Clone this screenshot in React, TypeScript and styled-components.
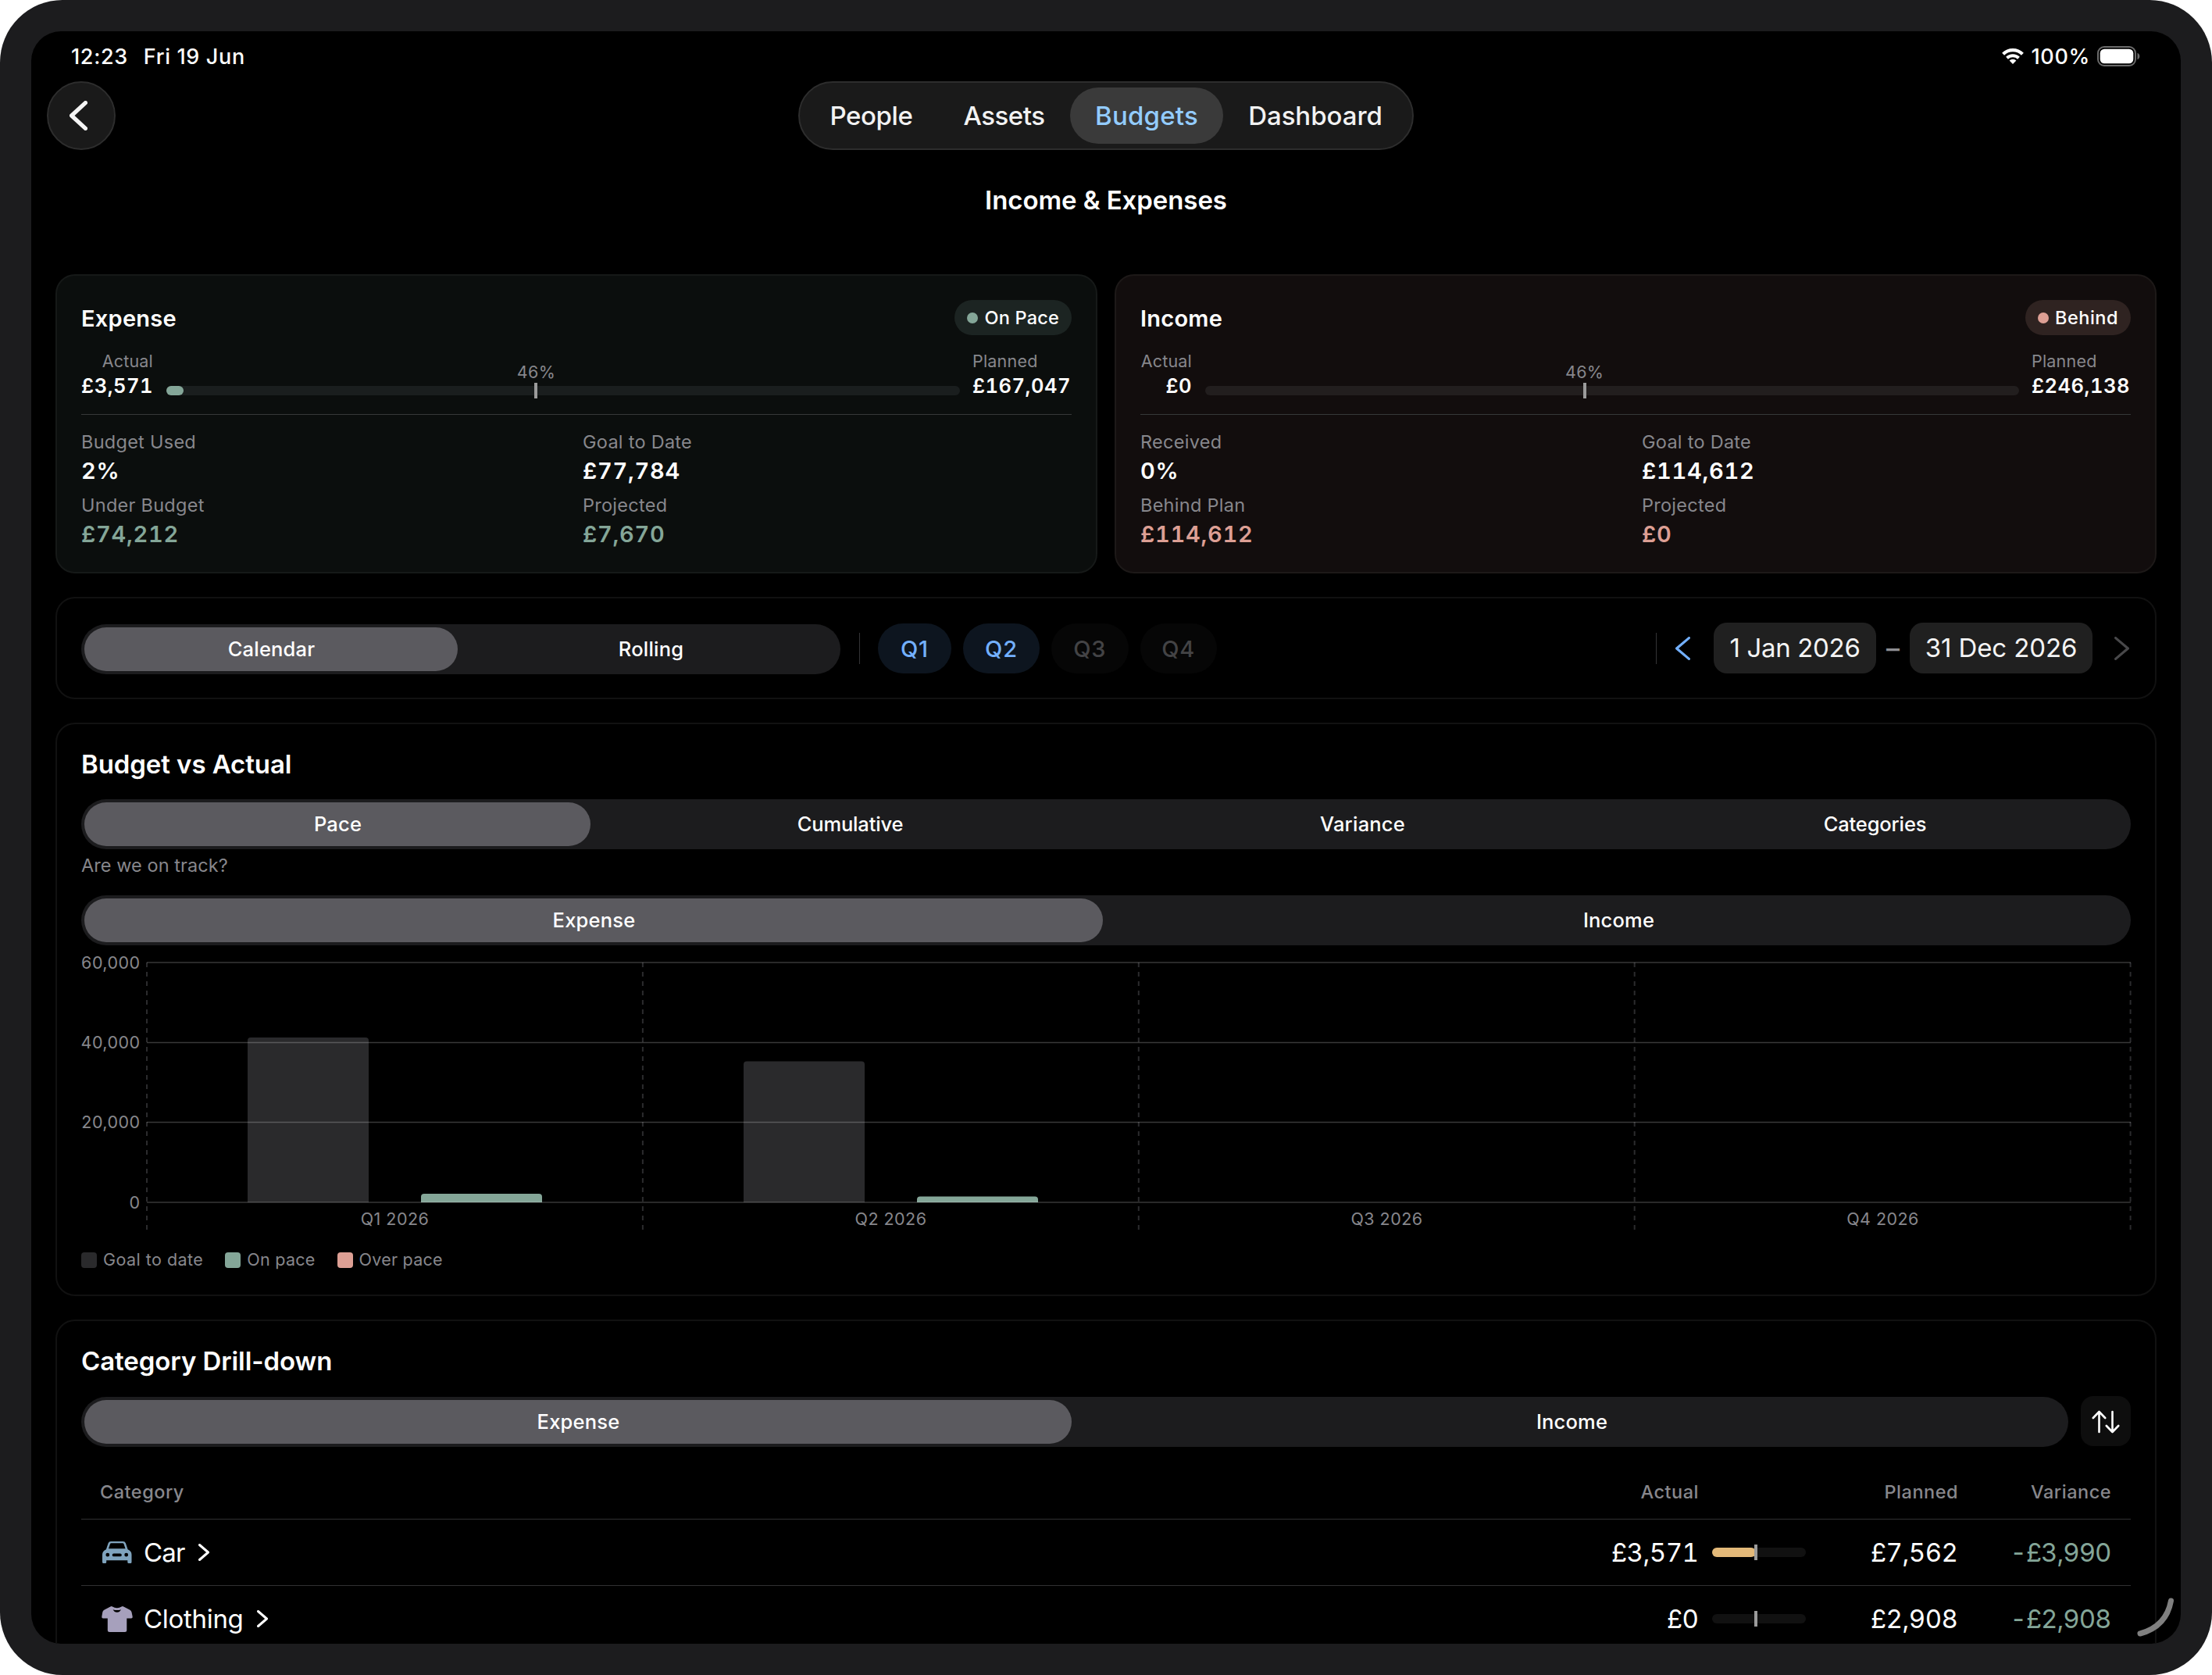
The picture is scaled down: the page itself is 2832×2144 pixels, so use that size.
import React, { useState } from 'react';
import styled, { createGlobalStyle } from 'styled-components';

const sage = '#84a698';
const coral = '#dd9f94';
const grey = '#87878c';

const GlobalStyle = createGlobalStyle`
    * {
        box-sizing: border-box;
    }
    body {
        margin: 0;
        background: #ffffff;
        color: #ffffff;
        font-family: Inter, 'Liberation Sans', sans-serif;
    }
    button {
        border: none;
        padding: 0;
        margin: 0;
        color: inherit;
        font-family: inherit;
    }
`;

const Device = styled.div`
    width: 2832px;
    height: 2144px;
    padding: 40px;
    border-radius: 80px;
    background: #1c1c1e;
`;

const Screen = styled.main`
    position: relative;
    width: 2752px;
    height: 2064px;
    border-radius: 38px;
    background: #000000;
    overflow: hidden;
`;

const StatusBar = styled.header`
    display: flex;
    align-items: center;
    justify-content: space-between;
    height: 64px;
    padding: 0 52px 0 51px;
    font-size: 27px;
    font-weight: 500;
    letter-spacing: 0.65px;
    white-space: pre;
`;

const StatusGroup = styled.div<{ $gap: number }>`
    display: flex;
    align-items: center;
    gap: ${(props) => props.$gap}px;
`;

const NavBar = styled.nav`
    display: grid;
    grid-template-columns: 1fr auto 1fr;
    height: 88px;
    padding: 0 20px;
`;

const BackButton = styled.button`
    display: flex;
    align-items: center;
    width: 88px;
    height: 88px;
    padding-left: 27px;
    border: 2px solid #2d2d2d;
    border-radius: 50%;
    background: #1a1a1a;
`;

const Tabs = styled.div`
    display: flex;
    padding: 6px;
    border: 2px solid #2d2d2d;
    border-radius: 44px;
    background: #1a1a1a;
`;

const Tab = styled.button<{ $width: number; $active: boolean; $tracking: number }>`
    width: ${(props) => props.$width}px;
    height: 72px;
    border-radius: 36px;
    background: ${(props) => (props.$active ? '#3a3a3a' : 'transparent')};
    color: ${(props) => (props.$active ? '#93ccff' : '#f2f2f2')};
    font-size: 33px;
    font-weight: 500;
    letter-spacing: ${(props) => props.$tracking}px;
`;

const PageTitle = styled.h1`
    margin: 0 0 31px;
    font-size: 33px;
    font-weight: 600;
    line-height: 128px;
    letter-spacing: -0.08px;
    text-align: center;
`;

const Content = styled.div`
    display: flex;
    flex-direction: column;
    gap: 30px;
    padding: 0 31px;
`;

const SummaryGrid = styled.div`
    display: grid;
    grid-template-columns: 1fr 1fr;
    gap: 22px;
`;

const Card = styled.section`
    padding: 29px 31px 28px;
    border: 2px solid #111111;
    border-radius: 25px;
`;

const SummaryCard = styled(Card)<{ $behind: boolean }>`
    padding: 31px 31px 30px;
    border-color: ${(props) => (props.$behind ? '#1d1918' : '#161918')};
    background: ${(props) => (props.$behind ? '#120d0d' : '#0b0e0d')};
`;

const SummaryHeader = styled.div`
    display: flex;
    align-items: center;
    justify-content: space-between;
    height: 45px;
`;

const SummaryTitle = styled.h2`
    margin: 0;
    padding-top: 2px;
    font-size: 29px;
    font-weight: 600;
    letter-spacing: 0.25px;
`;

const Badge = styled.div<{ $behind: boolean }>`
    display: flex;
    align-items: center;
    gap: 8px;
    height: 45px;
    padding: 0 16px;
    border-radius: 23px;
    background: ${(props) => (props.$behind ? '#2f2321' : '#1c2422')};
    font-size: 23.5px;
    font-weight: 500;
    letter-spacing: ${(props) => (props.$behind ? 0.5 : 0.2)}px;
`;

const BadgeDot = styled.span<{ $behind: boolean }>`
    width: 14px;
    height: 14px;
    border-radius: 50%;
    background: ${(props) => (props.$behind ? coral : sage)};
`;

const ProgressRow = styled.div`
    display: flex;
    align-items: flex-end;
    margin-top: 19px;
    padding-bottom: 20px;
    border-bottom: 1px solid #363838;
`;

const ProgressEnd = styled.div<{ $width: number; $align: 'left' | 'right' }>`
    width: ${(props) => props.$width}px;
    text-align: ${(props) => props.$align};
    white-space: nowrap;
`;

const SmallLabel = styled.div`
    color: ${grey};
    font-size: 21.5px;
    line-height: 28px;
    letter-spacing: 0.2px;
`;

const EndValue = styled.div`
    margin-top: 2px;
    font-size: 25.5px;
    font-weight: 600;
    line-height: 32px;
    letter-spacing: 0.5px;
    font-feature-settings: 'tnum';
`;

const Track = styled.div<{ $color: string }>`
    position: relative;
    flex: 1;
    height: 12px;
    margin: 0 16px 4px 17px;
    border-radius: 6px;
    background: ${(props) => props.$color};
`;

const TrackFill = styled.div<{ $color: string }>`
    height: 12px;
    border-radius: 6px;
    background: ${(props) => props.$color};
`;

const TrackTick = styled.span`
    position: absolute;
    top: -4px;
    left: calc(46.6% - 2px);
    width: 4px;
    height: 20px;
    background: #9b9b9b;
`;

const TrackLabel = styled.span`
    position: absolute;
    top: -32px;
    left: 46.6%;
    transform: translateX(-50%);
    color: ${grey};
    font-size: 21.5px;
    line-height: 28px;
    letter-spacing: 0.3px;
`;

const StatGrid = styled.div`
    display: grid;
    grid-template-columns: 1fr 1fr;
    gap: 10px 16px;
    margin-top: 19px;
`;

const StatLabel = styled.div`
    color: ${grey};
    font-size: 23.5px;
    line-height: 32px;
    letter-spacing: 0.27px;
`;

const StatValue = styled.div<{ $color: string }>`
    margin-top: 3px;
    color: ${(props) => props.$color};
    font-size: 29px;
    font-weight: 600;
    line-height: 36px;
    letter-spacing: 0.75px;
    font-feature-settings: 'tnum';
`;

const FilterCard = styled(Card)`
    display: flex;
    align-items: flex-start;
    height: 131px;
    padding: 31px 31px 0;
`;

const FilterSegment = styled.div`
    width: 972px;
    margin: 2px 24px 0 0;
`;

const Separator = styled.span`
    width: 1px;
    height: 40px;
    margin-top: 13px;
    background: #343436;
`;

const Quarters = styled.div`
    display: flex;
    gap: 15px;
    margin: 1px 0 0 23px;
`;

const QuarterPill = styled.button<{ $width: number; $active: boolean }>`
    width: ${(props) => props.$width}px;
    height: 64px;
    border-radius: 32px;
    background: ${(props) => (props.$active ? '#0d151f' : '#060606')};
    color: ${(props) => (props.$active ? '#73b0ff' : '#434345')};
    font-size: 29px;
    font-weight: 500;
    letter-spacing: 0.8px;
`;

const DateRange = styled.div`
    display: flex;
    align-items: flex-start;
    margin-left: auto;
`;

const DateControls = styled.div`
    display: flex;
    align-items: center;
    height: 65px;
    margin-left: 24px;
`;

const DatePill = styled.button<{ $width: number; $tracking: number }>`
    width: ${(props) => props.$width}px;
    height: 65px;
    padding-bottom: 2px;
    border-radius: 17px;
    background: #202020;
    color: #f4f4f4;
    font-size: 33px;
    letter-spacing: ${(props) => props.$tracking}px;
`;

const DateDash = styled.span`
    width: 43px;
    color: #8e8e93;
    font-size: 34px;
    font-weight: 500;
    text-align: center;
`;

const StepButton = styled.button<{ $side: 'left' | 'right' }>`
    display: flex;
    width: 21px;
    background: none;
    ${(props) => (props.$side === 'left' ? 'margin-right: 28px;' : 'margin-left: 28px;')}
`;

const SectionTitle = styled.h2`
    margin: 0 0 23px;
    font-size: 33px;
    font-weight: 600;
    line-height: 44px;
    letter-spacing: -0.08px;
`;

const SegmentTrack = styled.div`
    display: flex;
    width: 100%;
    height: 64px;
    border-radius: 32px;
    background: #1c1c1e;
`;

const SegmentItem = styled.button<{ $active: boolean; $tracking: number }>`
    flex: 1;
    height: 64px;
    padding: 0 0 2px 1px;
    border: 4px solid transparent;
    border-radius: 32px;
    background: ${(props) => (props.$active ? '#5b5a5f' : 'transparent')};
    background-clip: padding-box;
    font-size: 25.5px;
    font-weight: 500;
    letter-spacing: ${(props) => props.$tracking}px;
`;

const Hint = styled.p`
    margin: 5px 0 22px;
    color: ${grey};
    font-size: 23.5px;
    line-height: 32px;
    letter-spacing: 0.06px;
`;

const ChartSvg = styled.svg`
    display: block;
    width: 2624px;
    height: 380px;
    overflow: visible;
`;

const ChartText = styled.text`
    fill: ${grey};
    font-size: 21.5px;
    letter-spacing: 0.45px;
`;

const Legend = styled.div`
    display: flex;
    gap: 28px;
    margin-top: 7px;
    color: ${grey};
    font-size: 21.5px;
    line-height: 31px;
    padding-bottom: 1px;
`;

const LegendItem = styled.div<{ $tracking: number }>`
    display: flex;
    align-items: center;
    gap: 8px;
    letter-spacing: ${(props) => props.$tracking}px;
`;

const Swatch = styled.span<{ $color: string }>`
    width: 20px;
    height: 20px;
    border-radius: 4px;
    background: ${(props) => props.$color};
`;

const DrillControls = styled.div`
    display: flex;
    align-items: flex-start;
    gap: 16px;
`;

const DrillSegment = styled.div`
    flex: 1;
    margin-top: 1px;
`;

const SortButton = styled.button`
    display: flex;
    align-items: center;
    justify-content: center;
    width: 64px;
    height: 64px;
    padding-top: 1px;
    border-radius: 16px;
    background: #0e0e0e;
`;

const TableRow = styled.div`
    display: grid;
    grid-template-columns: 1fr 200px 136px 196px 196px;
    align-items: center;
    height: 85px;
    padding: 0 24px;
    border-bottom: 1px solid #303032;
    font-size: 33px;
    white-space: nowrap;
`;

const TableHead = styled(TableRow)`
    height: 71px;
    margin-top: 22px;
    color: ${grey};
    font-size: 23.5px;
    font-weight: 500;
    letter-spacing: 0.5px;
`;

const HeadCell = styled.span<{ $right?: boolean }>`
    padding-right: ${(props) => (props.$right ? 1 : 0)}px;
    text-align: ${(props) => (props.$right ? 'right' : 'left')};
`;

const CategoryCell = styled.div`
    display: flex;
    align-items: center;
`;

const CategoryName = styled.span<{ $tracking: number }>`
    margin: 0 17px 0 12px;
    letter-spacing: ${(props) => props.$tracking}px;
`;

const Amount = styled.span<{ $color?: string; $tracking?: number }>`
    padding-right: 1.5px;
    color: ${(props) => props.$color || '#ffffff'};
    text-align: right;
    letter-spacing: ${(props) => props.$tracking || -0.5}px;
    font-feature-settings: 'tnum';
`;

const MiniTrack = styled(Track)`
    width: 120px;
    margin: 0 0 0 16px;
`;

const CornerHandle = styled.svg`
    position: absolute;
    right: 6px;
    bottom: 6px;
    width: 56px;
    height: 60px;
`;

const Chevron = ({ width, height, stroke, color, flip }: any) => (
    <svg width={width} height={height} viewBox={`0 0 ${width} ${height}`} fill="none">
        <path
            d={
                flip
                    ? `M${stroke / 2} ${stroke / 2}L${width - stroke / 2} ${height / 2}L${stroke / 2} ${height - stroke / 2}`
                    : `M${width - stroke / 2} ${stroke / 2}L${stroke / 2} ${height / 2}L${width - stroke / 2} ${height - stroke / 2}`
            }
            stroke={color}
            strokeWidth={stroke}
            strokeLinecap="round"
            strokeLinejoin="round"
        />
    </svg>
);

const WifiIcon = () => (
    <svg width="30" height="20" viewBox="0 0 30 20" fill="none">
        <path d="M2.6 7.2A17.7 17.7 0 0 1 27.4 7.2" stroke="#fff" strokeWidth="4.2" />
        <path d="M7.5 12.2A10.8 10.8 0 0 1 22.5 12.2" stroke="#fff" strokeWidth="4" />
        <path d="M15 20L10.6 15.4A6.4 6.4 0 0 1 19.4 15.4Z" fill="#fff" />
    </svg>
);

const BatteryIcon = () => (
    <svg width="55" height="26" viewBox="0 0 55 26" fill="none">
        <rect x="1" y="1" width="48" height="24" rx="8" stroke="#6b6b6b" strokeWidth="2" />
        <rect x="3.7" y="3.7" width="42.6" height="18.6" rx="5.5" fill="#fff" />
        <path d="M51.5 8.8C55.3 10.2 55.3 15.8 51.5 17.2Z" fill="#6b6b6b" />
    </svg>
);

const CarIcon = () => (
    <svg width="44" height="44" viewBox="0 0 44 44">
        <path
            fill="#7fa3bd"
            fillRule="evenodd"
            d="M14 8H29.500Q32 8 32.900 10.300L35.600 18.300Q40.500 20.500 40.500 25V34.500Q40.500 36 39 36H36.800Q35.300 36 35.300 34.500V32.200H8.200V34.500Q8.200 36 6.700 36H4.500Q3 36 3 34.500V25Q3 20.500 7.900 18.300L10.600 10.300Q11.500 8 14 8ZM14.500 10.300Q13.300 10.300 12.900 11.500L11 17.300H32.500L30.600 11.500Q30.200 10.300 29 10.300ZM9.800 22.800A2.400 2.400 0 1 0 9.800 27.600A2.400 2.400 0 1 0 9.800 22.800ZM33.700 22.800A2.400 2.400 0 1 0 33.700 27.600A2.400 2.400 0 1 0 33.700 22.800ZM17.600 23.500A1.900 1.900 0 1 0 17.600 27.300H25.900A1.900 1.900 0 1 0 25.900 23.500Z"
        />
    </svg>
);

const ShirtIcon = () => (
    <svg width="44" height="44" viewBox="0 0 44 44">
        <path
            fill="#a6a0bc"
            d="M13.400 6.400Q14.800 5.600 16 6.500Q18.500 8.300 21.800 8.300Q25.100 8.300 27.600 6.500Q28.800 5.600 30.200 6.400L38 10.500Q40 11.600 40.500 13.600L41.700 19.300Q42 21.500 40 21.500H34.300V36.500Q34.300 39 31.800 39H12.300Q9.800 39 9.800 36.500V21.500H4Q2 21.500 2.300 19.300L3.300 13.600Q3.700 11.600 5.700 10.500Z"
        />
        <path d="M16.600 10.200Q21.800 12 27 10.200Q25.200 13.800 21.800 13.800Q18.400 13.800 16.600 10.200Z" fill="#000" />
    </svg>
);

const SortIcon = () => (
    <svg width="36" height="30" viewBox="0 0 36 30" fill="none" stroke="#fff" strokeWidth="2.600" strokeLinecap="round" strokeLinejoin="round">
        <path d="M9.500 28V2M1.800 10L9.500 2L17.200 10" />
        <path d="M26.500 2V28M18.800 20L26.500 28L34.200 20" />
    </svg>
);

const Segments = ({ items }: { items: string[] }) => {
    const [selected, setSelected] = useState(items[0]);
    return (
        <SegmentTrack>
            {items.map((item) => (
                <SegmentItem
                    key={item}
                    type="button"
                    $active={item === selected}
                    $tracking={item.length > 8 ? -0.15 : 0.2}
                    onClick={() => setSelected(item)}
                >
                    {item}
                </SegmentItem>
            ))}
        </SegmentTrack>
    );
};

const summaries = [
    {
        title: 'Expense',
        status: 'On Pace',
        behind: false,
        actual: '£3,571',
        actualWidth: 92,
        planned: '£167,047',
        plannedWidth: 127,
        progress: 2.15,
        stats: [
            ['Budget Used', '2%'],
            ['Goal to Date', '£77,784'],
            ['Under Budget', '£74,212'],
            ['Projected', '£7,670'],
        ],
    },
    {
        title: 'Income',
        status: 'Behind',
        behind: true,
        actual: '£0',
        actualWidth: 66,
        planned: '£246,138',
        plannedWidth: 127,
        progress: 0,
        stats: [
            ['Received', '0%'],
            ['Goal to Date', '£114,612'],
            ['Behind Plan', '£114,612'],
            ['Projected', '£0'],
        ],
    },
];

const Summary = ({ data }: { data: (typeof summaries)[0] }) => {
    const accent = data.behind ? coral : sage;
    return (
        <SummaryCard $behind={data.behind}>
            <SummaryHeader>
                <SummaryTitle>{data.title}</SummaryTitle>
                <Badge $behind={data.behind}>
                    <BadgeDot $behind={data.behind} />
                    {data.status}
                </Badge>
            </SummaryHeader>
            <ProgressRow>
                <ProgressEnd $width={data.actualWidth} $align="right">
                    <SmallLabel>Actual</SmallLabel>
                    <EndValue>{data.actual}</EndValue>
                </ProgressEnd>
                <Track $color={data.behind ? '#221e1e' : '#1a1e1e'}>
                    {data.progress > 0 && <TrackFill $color={sage} style={{ width: `${data.progress}%` }} />}
                    <TrackLabel>46%</TrackLabel>
                    <TrackTick />
                </Track>
                <ProgressEnd $width={data.plannedWidth} $align="left">
                    <SmallLabel>Planned</SmallLabel>
                    <EndValue>{data.planned}</EndValue>
                </ProgressEnd>
            </ProgressRow>
            <StatGrid>
                {data.stats.map(([label, value], i) => (
                    <div key={label}>
                        <StatLabel>{label}</StatLabel>
                        <StatValue $color={i > 1 ? accent : '#ffffff'}>{value}</StatValue>
                    </div>
                ))}
            </StatGrid>
        </SummaryCard>
    );
};

const gridLines = [
    { label: '60,000', y: 22, width: 2, opacity: 0.16 },
    { label: '40,000', y: 124.5, width: 1.4, opacity: 0.22 },
    { label: '20,000', y: 226.5, width: 1.4, opacity: 0.22 },
    { label: '0', y: 329, width: 2, opacity: 0.16 },
];

const quarters = [
    { label: 'Q1 2026', goal: 211, actual: 11 },
    { label: 'Q2 2026', goal: 180.5, actual: 7.5 },
    { label: 'Q3 2026', goal: 0, actual: 0 },
    { label: 'Q4 2026', goal: 0, actual: 0 },
];

const bar = (x: number, h: number) => {
    const top = 329 - h;
    return `M${x} 329V${top + 4}Q${x} ${top} ${x + 4} ${top}H${x + 151}Q${x + 155} ${top} ${x + 155} ${top + 4}V329Z`;
};

const PaceChart = () => (
    <ChartSvg viewBox="0 0 2624 380">
        {[0, 1, 2, 3, 4].map((i) => (
            <line
                key={i}
                x1={84 + i * 634.9}
                x2={84 + i * 634.9}
                y1="22"
                y2="364"
                stroke="#2b2b2d"
                strokeWidth="2"
                strokeDasharray="6 6"
            />
        ))}
        {quarters.map((q, i) => (
            <g key={q.label}>
                {q.goal > 0 && <path d={bar(213 + i * 635, q.goal)} fill="#2a2a2c" />}
                {q.actual > 0 && <path d={bar(435 + i * 635, q.actual)} fill={sage} />}
                <ChartText x={401.5 + i * 635} y="358" textAnchor="middle">
                    {q.label}
                </ChartText>
            </g>
        ))}
        {gridLines.map((g) => (
            <g key={g.label}>
                <line x1="84" x2="2624" y1={g.y} y2={g.y} stroke="#fff" strokeOpacity={g.opacity} strokeWidth={g.width} />
                <ChartText x="75.5" y={g.y + 7.9} textAnchor="end">
                    {g.label}
                </ChartText>
            </g>
        ))}
    </ChartSvg>
);

const categories = [
    { name: 'Car', icon: <CarIcon />, tracking: -0.8, actual: '£3,571', fill: 47, planned: '£7,562', variance: '-£3,990' },
    { name: 'Clothing', icon: <ShirtIcon />, tracking: -0.3, actual: '£0', fill: 0, planned: '£2,908', variance: '-£2,908' },
];

const tabs = [
    { name: 'People', width: 171, tracking: -0.4 },
    { name: 'Assets', width: 169, tracking: -0.5 },
    { name: 'Budgets', width: 196, tracking: 0.2 },
    { name: 'Dashboard', width: 236, tracking: -0.05 },
];

export default function App() {
    const [tab, setTab] = useState('Budgets');

    return (
        <>
            <GlobalStyle />
            <Device>
                <Screen>
                    <StatusBar>
                        <StatusGroup $gap={20}>
                            <span>12:23</span>
                            <span>Fri 19 Jun</span>
                        </StatusGroup>
                        <StatusGroup $gap={9}>
                            <WifiIcon />
                            <span>100%</span>
                            <BatteryIcon />
                        </StatusGroup>
                    </StatusBar>
                    <NavBar>
                        <BackButton type="button" aria-label="Back">
                            <Chevron width={23} height={38} stroke={5.2} color="#f4f4f4" />
                        </BackButton>
                        <Tabs>
                            {tabs.map((t) => (
                                <Tab
                                    key={t.name}
                                    type="button"
                                    $width={t.width}
                                    $tracking={t.tracking}
                                    $active={t.name === tab}
                                    onClick={() => setTab(t.name)}
                                >
                                    {t.name}
                                </Tab>
                            ))}
                        </Tabs>
                    </NavBar>
                    <PageTitle>Income &amp; Expenses</PageTitle>
                    <Content>
                        <SummaryGrid>
                            {summaries.map((s) => (
                                <Summary key={s.title} data={s} />
                            ))}
                        </SummaryGrid>
                        <FilterCard>
                            <FilterSegment>
                                <Segments items={['Calendar', 'Rolling']} />
                            </FilterSegment>
                            <Separator />
                            <Quarters>
                                <QuarterPill type="button" $width={94} $active>
                                    Q1
                                </QuarterPill>
                                <QuarterPill type="button" $width={98} $active>
                                    Q2
                                </QuarterPill>
                                <QuarterPill type="button" $width={98.5} $active={false}>
                                    Q3
                                </QuarterPill>
                                <QuarterPill type="button" $width={98.5} $active={false}>
                                    Q4
                                </QuarterPill>
                            </Quarters>
                            <DateRange>
                                <Separator />
                                <DateControls>
                                    <StepButton type="button" $side="left" aria-label="Previous">
                                        <Chevron width={19} height={30} stroke={3.2} color="#73b0ff" />
                                    </StepButton>
                                    <DatePill type="button" $width={208} $tracking={-0.33}>
                                        1 Jan 2026
                                    </DatePill>
                                    <DateDash>–</DateDash>
                                    <DatePill type="button" $width={234} $tracking={-0.1}>
                                        31 Dec 2026
                                    </DatePill>
                                    <StepButton type="button" $side="right" aria-label="Next">
                                        <Chevron width={19} height={30} stroke={3.2} color="#48484a" flip />
                                    </StepButton>
                                </DateControls>
                            </DateRange>
                        </FilterCard>
                        <Card>
                            <SectionTitle>Budget vs Actual</SectionTitle>
                            <Segments items={['Pace', 'Cumulative', 'Variance', 'Categories']} />
                            <Hint>Are we on track?</Hint>
                            <Segments items={['Expense', 'Income']} />
                            <PaceChart />
                            <Legend>
                                <LegendItem $tracking={0.46}>
                                    <Swatch $color="#2a2a2c" />
                                    Goal to date
                                </LegendItem>
                                <LegendItem $tracking={0.25}>
                                    <Swatch $color={sage} />
                                    On pace
                                </LegendItem>
                                <LegendItem $tracking={0.25}>
                                    <Swatch $color={coral} />
                                    Over pace
                                </LegendItem>
                            </Legend>
                        </Card>
                        <Card>
                            <SectionTitle>Category Drill-down</SectionTitle>
                            <DrillControls>
                                <DrillSegment>
                                    <Segments items={['Expense', 'Income']} />
                                </DrillSegment>
                                <SortButton type="button" aria-label="Sort">
                                    <SortIcon />
                                </SortButton>
                            </DrillControls>
                            <TableHead>
                                <HeadCell>Category</HeadCell>
                                <HeadCell $right>Actual</HeadCell>
                                <span />
                                <HeadCell $right>Planned</HeadCell>
                                <HeadCell $right>Variance</HeadCell>
                            </TableHead>
                            {categories.map((c) => (
                                <TableRow key={c.name}>
                                    <CategoryCell>
                                        {c.icon}
                                        <CategoryName $tracking={c.tracking}>{c.name}</CategoryName>
                                        <Chevron width={14} height={22} stroke={3} color="#fff" flip />
                                    </CategoryCell>
                                    <Amount>{c.actual}</Amount>
                                    <MiniTrack $color="#111111">
                                        {c.fill > 0 && <TrackFill $color="#e3b979" style={{ width: `${c.fill}%` }} />}
                                        <TrackTick />
                                    </MiniTrack>
                                    <Amount>{c.planned}</Amount>
                                    <Amount $color={sage} $tracking={-1}>
                                        {c.variance}
                                    </Amount>
                                </TableRow>
                            ))}
                        </Card>
                    </Content>
                    {/* resize handle in the corner of the window */}
                    <CornerHandle viewBox="0 0 56 60" fill="none">
                        <path d="M49.5 11C45.500 33 32 47 10 53" stroke="#808080" strokeWidth="7" strokeLinecap="round" />
                    </CornerHandle>
                </Screen>
            </Device>
        </>
    );
}
